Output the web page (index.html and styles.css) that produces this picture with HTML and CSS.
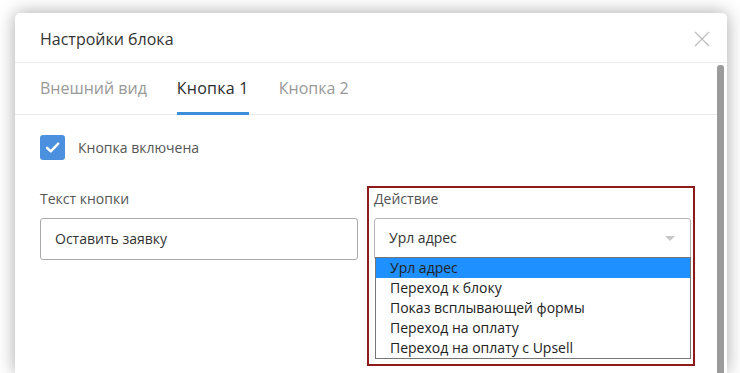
FILE: index.html
```html
<!doctype html>
<html>
<head>
	<meta charset='utf-8'>
	<title>Настройки блока</title>
	<link rel="stylesheet" href="styles.css">
</head>
<body>
<div class='modal'>
	<div class='modal-head'>
		<span class='modal-title'>Настройки блока</span>
		<span class='modal-close'><svg width='16' height='16' viewBox='0 0 16 16'><path d='M1 1L15 15M15 1L1 15' stroke='#bdbdbd' stroke-width='1.2' fill='none'/></svg></span>
	</div>
	<div class='modal-body'>
		<div class='modal-content'>
			<ul class='tabs'>
				<li>Внешний вид</li>
				<li class='cur'>Кнопка 1</li>
				<li>Кнопка 2</li>
			</ul>
			<label class='check-row'>
				<span class='check-box'><svg width='25' height='25' viewBox='0 0 25 25'><path d='M7 12.8L10.8 16.4L18.2 8.6' stroke='#fff' stroke-width='2.4' fill='none' stroke-linecap='round' stroke-linejoin='round'/></svg></span>
				<span class='check-text'>Кнопка включена</span>
			</label>
			<div class='fields'>
				<div class='field field-left'>
					<div class='field-label'>Текст кнопки</div>
					<div class='field-input'>Оставить заявку</div>
				</div>
				<div class='field field-marked'>
					<div class='field-label'>Действие</div>
					<div class='field-select'>Урл адрес<span class='arrow'></span></div>
					<ul class='options'>
						<li class='sel'>Урл адрес</li>
						<li>Переход к блоку</li>
						<li>Показ всплывающей формы</li>
						<li>Переход на оплату</li>
						<li>Переход на оплату с Upsell</li>
					</ul>
				</div>
			</div>
		</div>
		<div class='scrollbar'></div>
	</div>
</div>
</body>
</html>
```

FILE: styles.css
```css
*{margin:0;padding:0;box-sizing:border-box;}
html,body{height:373px;overflow:hidden;background:#fff;}
body{padding:13px 13px 0 15px;font-family:"Open Sans","Noto Sans",sans-serif;color:#333;}

.modal{background:#fff;border-radius:5px 5px 0 0;box-shadow:0 0 18px rgba(0,0,0,.35);height:360px;display:flex;flex-direction:column;}

.modal-head{display:flex;align-items:center;justify-content:space-between;padding:14px 17px 11px 25px;border-bottom:1px solid #ebebeb;}
.modal-title{font-size:16px;line-height:24px;color:#333;}
.modal-close{display:flex;width:16px;height:16px;cursor:pointer;}

.modal-body{flex:1;display:flex;min-height:0;}
.modal-content{flex:1;padding:0 22px 0 25px;}
.scrollbar{width:7px;margin:2px 3px 0 0;background:#9b9b9b;border-radius:3px 3px 0 0;}

.tabs{list-style:none;display:flex;gap:30px;border-bottom:1px solid #ebebeb;margin:0 -22px 0 -25px;padding:0 0 0 25px;}
.tabs li{font-size:16px;line-height:24px;color:#999;padding:13px 0 12px;border-bottom:3px solid transparent;margin-bottom:-1px;cursor:pointer;}
.tabs li.cur{color:#2b2b2b;letter-spacing:.25px;border-bottom-color:#3d8fdc;}

.check-row{display:flex;align-items:center;gap:13px;margin-top:20px;height:25px;}
.check-box{display:flex;width:25px;height:25px;border-radius:3px;background:#4a90df;}
.check-text{font-size:14px;color:#555;}

.fields{display:grid;grid-template-columns:318px 328px;column-gap:9px;align-items:start;margin-top:26px;}
.field-left{padding-top:3px;}
.field-label{font-size:14px;line-height:20px;color:#555;margin-bottom:9px;}
.field-input{height:42px;border:1px solid #aaa;border-radius:3px;padding:0 14px;font-size:14px;line-height:40px;color:#333;}

.field-marked{border:2px solid #8e1a1a;padding:1px 2px 5px 5px;}
.field-select{position:relative;height:42px;border:1px solid #b4b4b4;border-radius:3px;padding:0 14px;font-size:14px;line-height:38px;color:#333;}
.arrow{position:absolute;right:15px;top:17px;border-left:5px solid transparent;border-right:5px solid transparent;border-top:5px solid #c8c8c8;}

.options{position:relative;list-style:none;margin:-3px 0 0 1px;border:1px solid #767676;background:#fff;}
.options li{font-size:14px;line-height:20px;height:20px;padding-left:14px;color:#222;}
.options li.sel{background:#1e90ff;}
```
